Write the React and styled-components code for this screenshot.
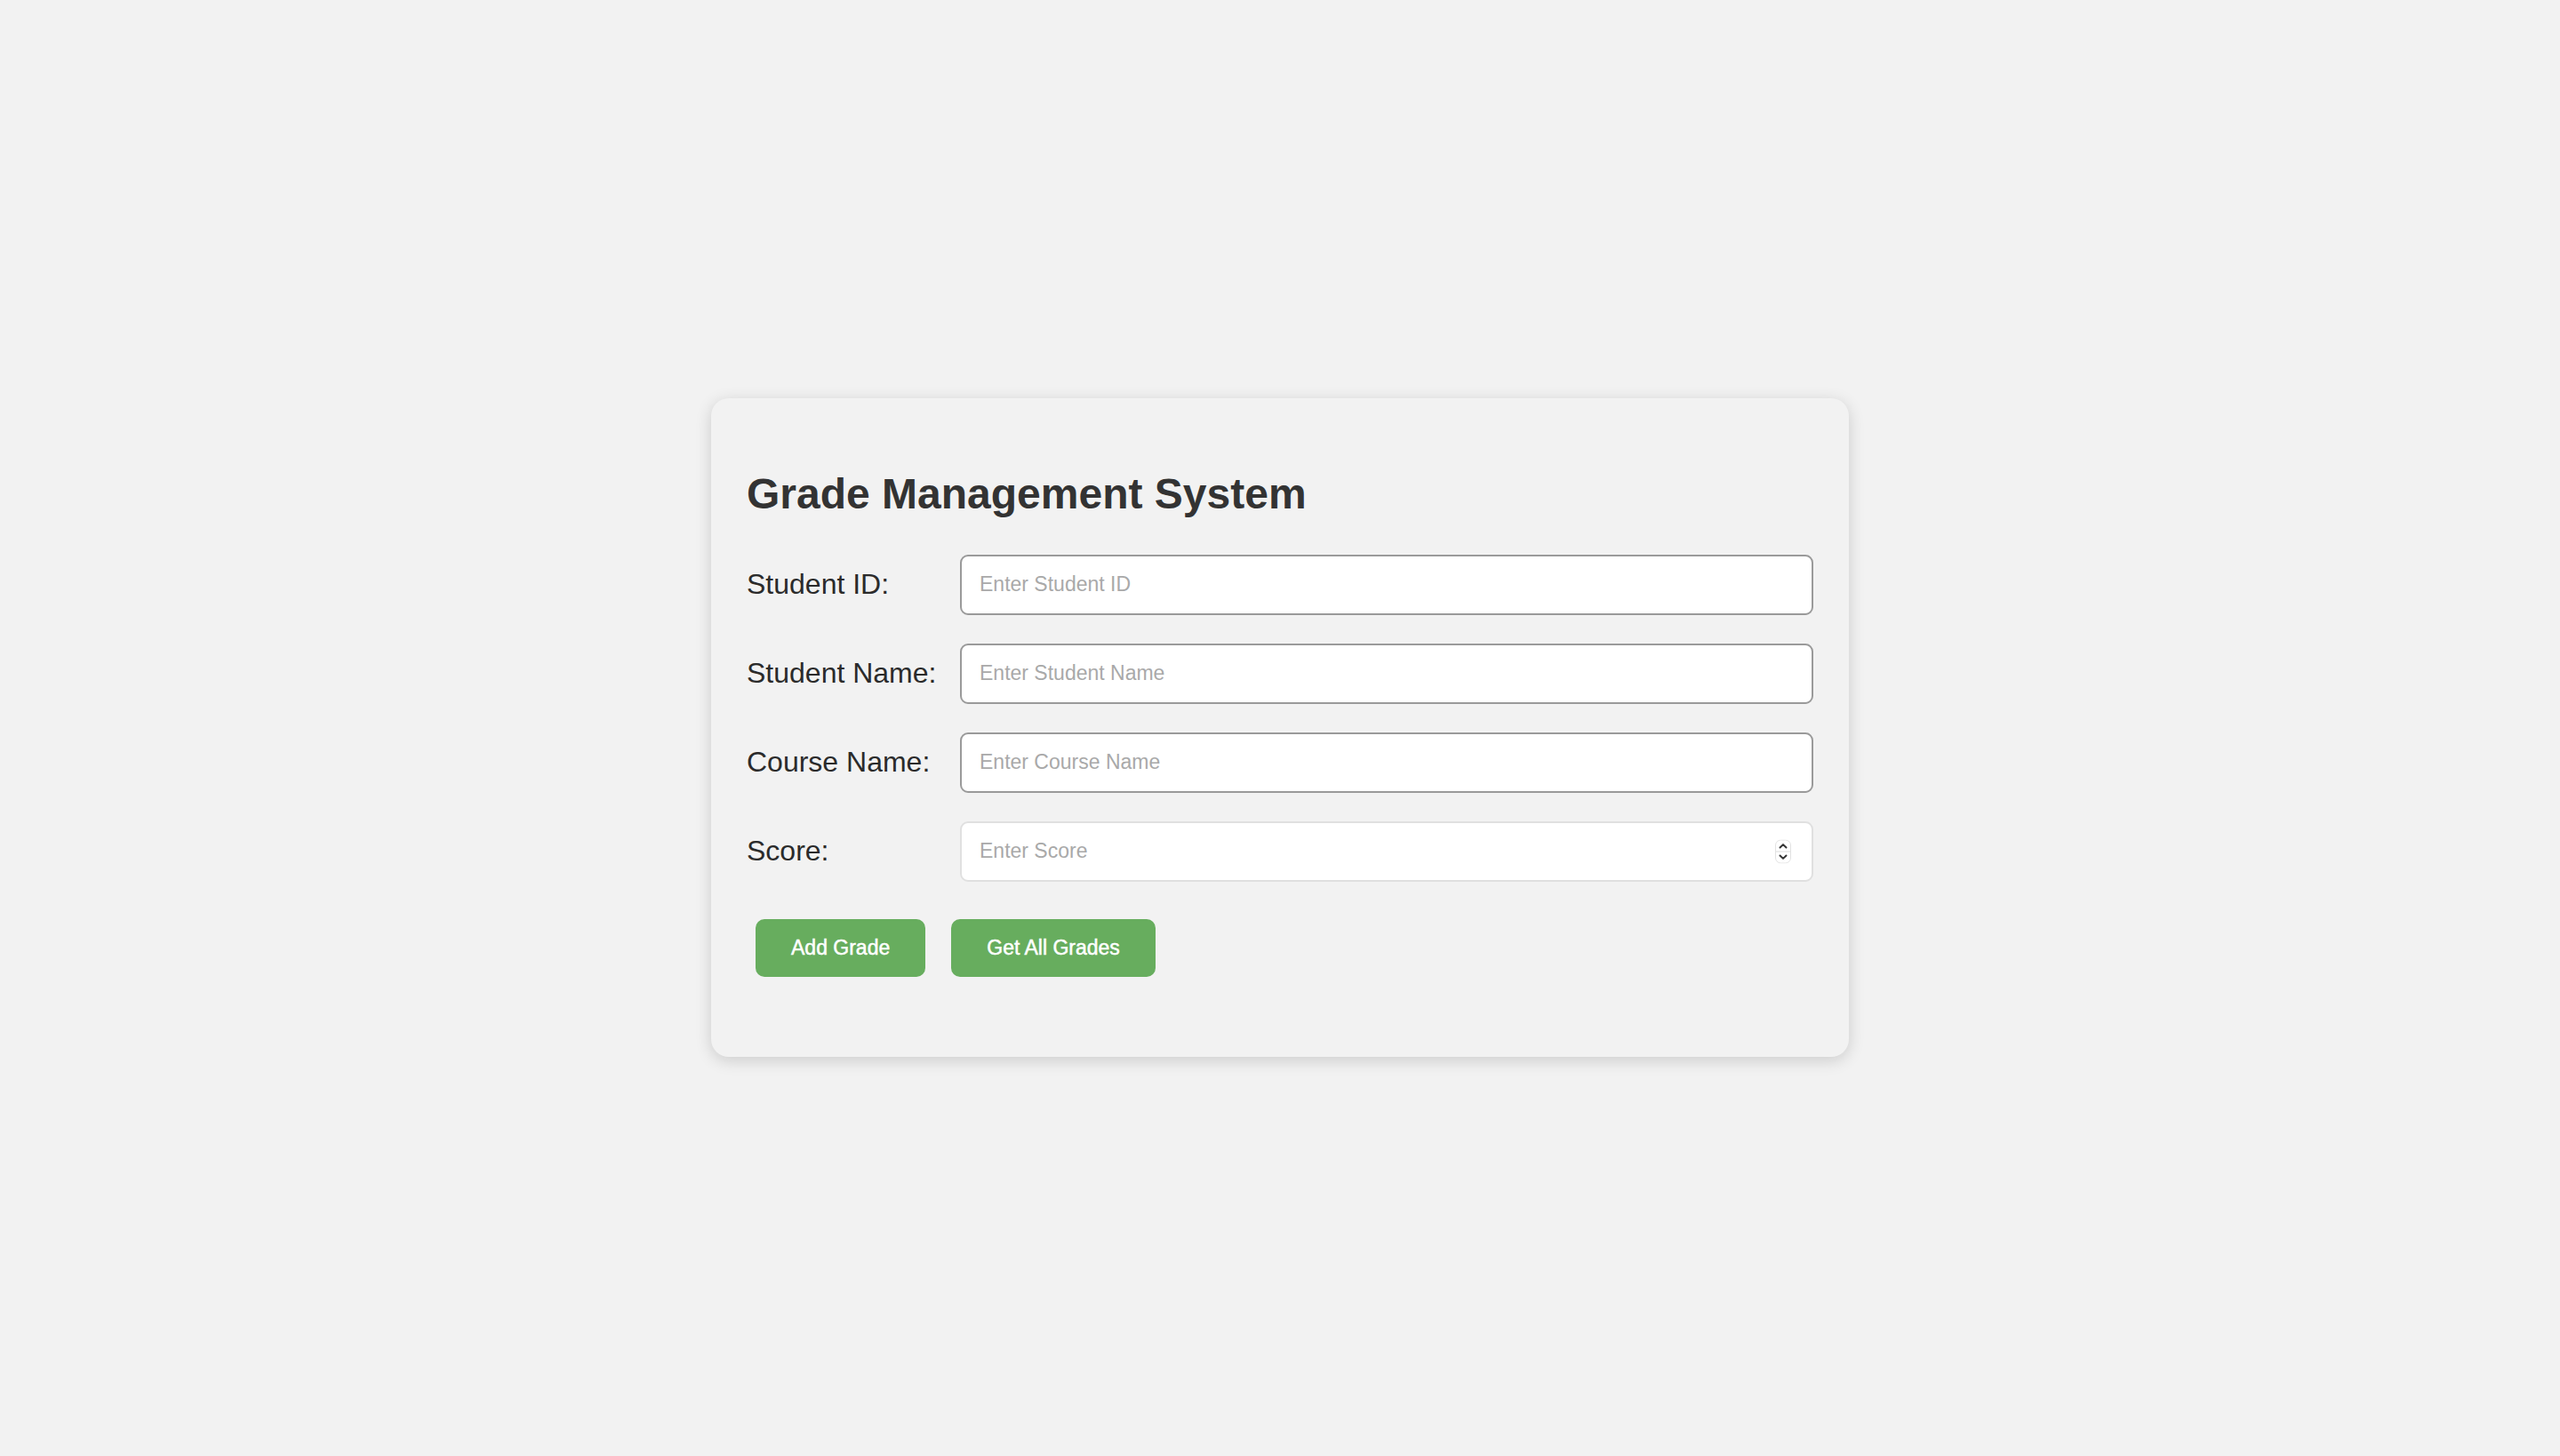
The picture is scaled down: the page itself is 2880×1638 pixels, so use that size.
import React from "react";
import styled, { createGlobalStyle } from "styled-components";

const GlobalStyle = createGlobalStyle`
  html, body { margin: 0; padding: 0; }
  body {
    background: #f2f2f2;
    font-family: "Liberation Sans", Arial, Helvetica, sans-serif;
  }
  #root { min-height: 100vh; }
`;

const Page = styled.div`
  min-height: 100vh;
  display: flex;
  align-items: center;
  justify-content: center;
`;

const Card = styled.div`
  width: 1280px;
  box-sizing: border-box;
  padding: 40px 40px 90px 40px;
  margin-top: -2px;
  background: #f2f2f2;
  border-radius: 20px;
  box-shadow: 0 4px 18px rgba(0, 0, 0, 0.16);
`;

const Title = styled.h2`
  margin: 40px 0 41px 0;
  font-size: 48px;
  line-height: 55px;
  font-weight: 700;
  color: #333;
`;

const Form = styled.div`
  display: flex;
  flex-direction: column;
  gap: 32px;
`;

const Row = styled.div`
  display: flex;
  align-items: center;
`;

const Label = styled.label`
  width: 20%;
  flex: none;
  font-size: 32px;
  color: #2b2b2b;
`;

const FieldWrap = styled.div`
  position: relative;
  width: 80%;
`;

const Input = styled.input`
  display: block;
  width: 100%;
  height: 68px;
  box-sizing: border-box;
  padding: 0 20px;
  border: 2px solid ${(p) => (p.$light ? "#e0e0e0" : "#9a9a9a")};
  border-radius: 9px;
  background: #fff;
  font-family: inherit;
  font-size: 23px;
  color: #333;
  outline: none;
  &::placeholder { color: #a9a9a9; }
`;

const Spinner = styled.div`
  position: absolute;
  right: 25px;
  top: 50%;
  transform: translateY(-50%);
  width: 18px;
  height: 27px;
  display: flex;
  align-items: center;
  justify-content: center;
`;

const Buttons = styled.div`
  display: flex;
  gap: 29px;
  padding-left: 10px;
  margin-top: 10px;
`;

const Button = styled.button`
  height: 65px;
  padding: 0 40px;
  border: none;
  border-radius: 10px;
  background: #67ad5e;
  color: #fff;
  font-family: inherit;
  font-size: 23px;
  font-weight: 400;
  -webkit-text-stroke: 0.5px #fff;
  cursor: pointer;
`;

const SpinIcon = () => (
  <svg width="18" height="27" viewBox="0 0 18 27">
    <rect x="0.5" y="0.5" width="17" height="26" rx="6" fill="#fff" stroke="#e2e2e2" />
    <line x1="1" y1="13.5" x2="17" y2="13.5" stroke="#dcdcdc" strokeWidth="1" />
    <path d="M5.5 9 L9 5.6 L12.5 9" fill="none" stroke="#333" strokeWidth="2" strokeLinecap="round" strokeLinejoin="round" />
    <path d="M5.5 18 L9 21.4 L12.5 18" fill="none" stroke="#333" strokeWidth="2" strokeLinecap="round" strokeLinejoin="round" />
  </svg>
);

const fields = [
  { id: "studentId", label: "Student ID:", placeholder: "Enter Student ID" },
  { id: "studentName", label: "Student Name:", placeholder: "Enter Student Name" },
  { id: "courseName", label: "Course Name:", placeholder: "Enter Course Name" },
  { id: "score", label: "Score:", placeholder: "Enter Score", number: true },
];

export default function App() {
  return (
    <>
      <GlobalStyle />
      <Page>
        <Card>
          <Title>Grade Management System</Title>
          <Form>
            {fields.map((f) => (
              <Row key={f.id}>
                <Label htmlFor={f.id}>{f.label}</Label>
                <FieldWrap>
                  <Input id={f.id} type="text" placeholder={f.placeholder} $light={f.number} />
                  {f.number && (
                    <Spinner>
                      <SpinIcon />
                    </Spinner>
                  )}
                </FieldWrap>
              </Row>
            ))}
            <Buttons>
              <Button>Add Grade</Button>
              <Button>Get All Grades</Button>
            </Buttons>
          </Form>
        </Card>
      </Page>
    </>
  );
}
